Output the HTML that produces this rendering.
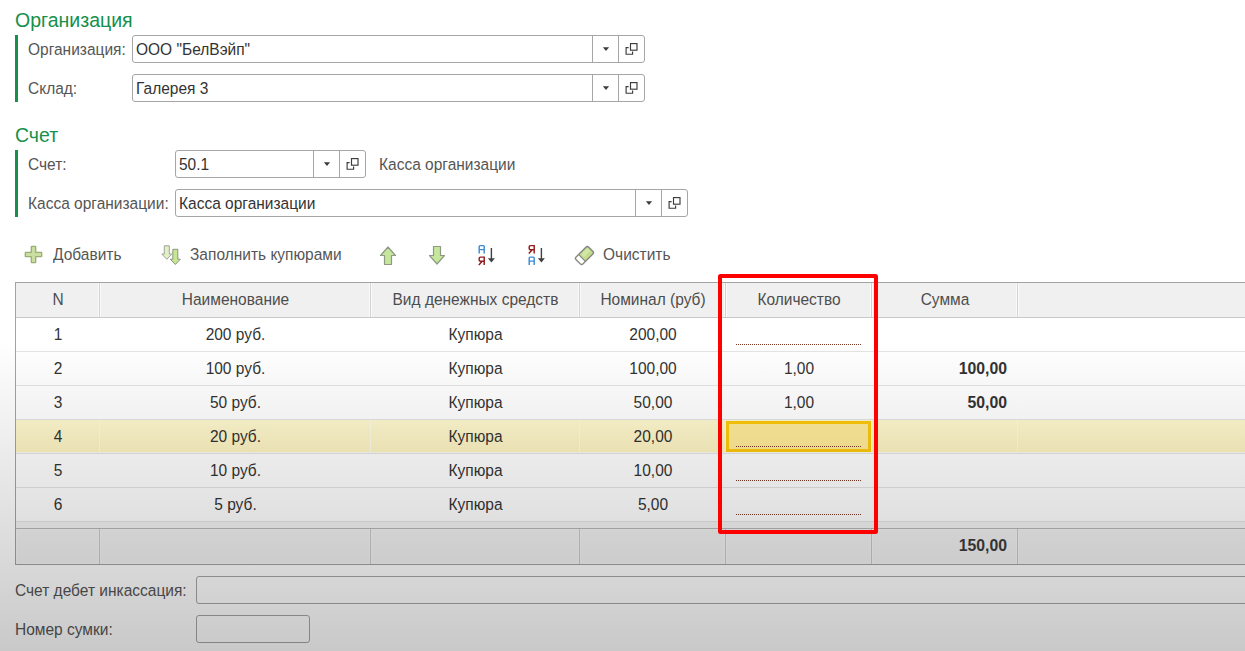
<!DOCTYPE html>
<html><head><meta charset="utf-8"><style>
html,body{margin:0;padding:0;width:1245px;height:651px;overflow:hidden;background:#fff;font-family:'Liberation Sans', sans-serif;}
</style></head><body>
<div style="position:absolute;left:15px;top:9px;font-size:19.5px;line-height:22px;color:#16904a;text-align:left;white-space:nowrap;transform:scaleY(1.05);transform-origin:0 18px;">Организация</div>
<div style="position:absolute;left:15px;top:35px;width:3px;height:67px;background:#16904a"></div>
<div style="position:absolute;left:28px;top:41px;font-size:15.5px;line-height:18px;color:#555555;text-align:left;white-space:nowrap;transform:scaleY(1.1);transform-origin:0 14px;">Организация:</div>
<div style="position:absolute;left:132px;top:35px;width:511px;height:26px;border:1px solid #a6a6a6;border-radius:3px;background:#fff"></div>
<div style="position:absolute;left:592px;top:35px;width:1px;height:28px;background:#a6a6a6"></div>
<div style="position:absolute;left:618px;top:35px;width:1px;height:28px;background:#a6a6a6"></div>
<svg style="position:absolute;left:600.5px;top:45.0px" width="10" height="8" viewBox="0 0 10 8"><path d="M1.9 2.2H8.1L5 6Z" fill="#3c3c3c"/></svg>
<svg style="position:absolute;left:623px;top:39px" width="20" height="20" viewBox="0 0 20 20"><rect x="7.5" y="4.6" width="6.5" height="6.6" fill="none" stroke="#3c3c3c" stroke-width="1.15"/><path d="M5.6 8.6H3.1V15.2H9.6V12.6" fill="none" stroke="#3c3c3c" stroke-width="1.15"/></svg>
<div style="position:absolute;left:136px;top:40.5px;font-size:15.5px;line-height:18px;color:#333333;text-align:left;white-space:nowrap;transform:scaleY(1.1);transform-origin:0 14px;">ООО "БелВэйп"</div>
<div style="position:absolute;left:28px;top:80px;font-size:15.5px;line-height:18px;color:#555555;text-align:left;white-space:nowrap;transform:scaleY(1.1);transform-origin:0 14px;">Склад:</div>
<div style="position:absolute;left:132px;top:74px;width:511px;height:26px;border:1px solid #a6a6a6;border-radius:3px;background:#fff"></div>
<div style="position:absolute;left:592px;top:74px;width:1px;height:28px;background:#a6a6a6"></div>
<div style="position:absolute;left:618px;top:74px;width:1px;height:28px;background:#a6a6a6"></div>
<svg style="position:absolute;left:600.5px;top:84.0px" width="10" height="8" viewBox="0 0 10 8"><path d="M1.9 2.2H8.1L5 6Z" fill="#3c3c3c"/></svg>
<svg style="position:absolute;left:623px;top:78px" width="20" height="20" viewBox="0 0 20 20"><rect x="7.5" y="4.6" width="6.5" height="6.6" fill="none" stroke="#3c3c3c" stroke-width="1.15"/><path d="M5.6 8.6H3.1V15.2H9.6V12.6" fill="none" stroke="#3c3c3c" stroke-width="1.15"/></svg>
<div style="position:absolute;left:136px;top:79.5px;font-size:15.5px;line-height:18px;color:#333333;text-align:left;white-space:nowrap;transform:scaleY(1.1);transform-origin:0 14px;">Галерея 3</div>
<div style="position:absolute;left:15px;top:124px;font-size:19.5px;line-height:22px;color:#16904a;text-align:left;white-space:nowrap;transform:scaleY(1.05);transform-origin:0 18px;">Счет</div>
<div style="position:absolute;left:15px;top:150px;width:3px;height:67px;background:#16904a"></div>
<div style="position:absolute;left:28px;top:156px;font-size:15.5px;line-height:18px;color:#555555;text-align:left;white-space:nowrap;transform:scaleY(1.1);transform-origin:0 14px;">Счет:</div>
<div style="position:absolute;left:175px;top:150px;width:189px;height:26px;border:1px solid #a6a6a6;border-radius:3px;background:#fff"></div>
<div style="position:absolute;left:313px;top:150px;width:1px;height:28px;background:#a6a6a6"></div>
<div style="position:absolute;left:339px;top:150px;width:1px;height:28px;background:#a6a6a6"></div>
<svg style="position:absolute;left:321.5px;top:160.0px" width="10" height="8" viewBox="0 0 10 8"><path d="M1.9 2.2H8.1L5 6Z" fill="#3c3c3c"/></svg>
<svg style="position:absolute;left:344px;top:154px" width="20" height="20" viewBox="0 0 20 20"><rect x="7.5" y="4.6" width="6.5" height="6.6" fill="none" stroke="#3c3c3c" stroke-width="1.15"/><path d="M5.6 8.6H3.1V15.2H9.6V12.6" fill="none" stroke="#3c3c3c" stroke-width="1.15"/></svg>
<div style="position:absolute;left:179px;top:155.5px;font-size:15.5px;line-height:18px;color:#333333;text-align:left;white-space:nowrap;transform:scaleY(1.1);transform-origin:0 14px;">50.1</div>
<div style="position:absolute;left:379px;top:156px;font-size:15.5px;line-height:18px;color:#555555;text-align:left;white-space:nowrap;transform:scaleY(1.1);transform-origin:0 14px;">Касса организации</div>
<div style="position:absolute;left:28px;top:195px;font-size:15.5px;line-height:18px;color:#555555;text-align:left;white-space:nowrap;transform:scaleY(1.1);transform-origin:0 14px;">Касса организации:</div>
<div style="position:absolute;left:175px;top:189px;width:511px;height:26px;border:1px solid #a6a6a6;border-radius:3px;background:#fff"></div>
<div style="position:absolute;left:635px;top:189px;width:1px;height:28px;background:#a6a6a6"></div>
<div style="position:absolute;left:661px;top:189px;width:1px;height:28px;background:#a6a6a6"></div>
<svg style="position:absolute;left:643.5px;top:199.0px" width="10" height="8" viewBox="0 0 10 8"><path d="M1.9 2.2H8.1L5 6Z" fill="#3c3c3c"/></svg>
<svg style="position:absolute;left:666px;top:193px" width="20" height="20" viewBox="0 0 20 20"><rect x="7.5" y="4.6" width="6.5" height="6.6" fill="none" stroke="#3c3c3c" stroke-width="1.15"/><path d="M5.6 8.6H3.1V15.2H9.6V12.6" fill="none" stroke="#3c3c3c" stroke-width="1.15"/></svg>
<div style="position:absolute;left:179px;top:194.5px;font-size:15.5px;line-height:18px;color:#333333;text-align:left;white-space:nowrap;transform:scaleY(1.1);transform-origin:0 14px;">Касса организации</div>
<div style="position:absolute;left:53px;top:246px;font-size:15.5px;line-height:18px;color:#555555;text-align:left;white-space:nowrap;transform:scaleY(1.1);transform-origin:0 14px;">Добавить</div>
<div style="position:absolute;left:190px;top:246px;font-size:15.5px;line-height:18px;color:#555555;text-align:left;white-space:nowrap;transform:scaleY(1.1);transform-origin:0 14px;">Заполнить купюрами</div>
<div style="position:absolute;left:603px;top:246px;font-size:15.5px;line-height:18px;color:#555555;text-align:left;white-space:nowrap;transform:scaleY(1.1);transform-origin:0 14px;">Очистить</div>
<svg style="position:absolute;left:24px;top:245px" width="20" height="20" viewBox="0 0 20 20"><path d="M7.3 1.8Q7.3 1.3 7.8 1.3H11.2Q11.7 1.3 11.7 1.8V7.3H17.2Q17.7 7.3 17.7 7.8V11.2Q17.7 11.7 17.2 11.7H11.7V17.2Q11.7 17.7 11.2 17.7H7.8Q7.3 17.7 7.3 17.2V11.7H1.8Q1.3 11.7 1.3 11.2V7.8Q1.3 7.3 1.8 7.3H7.3Z" fill="#c9dea0" stroke="#98ae72" stroke-width="1.3" stroke-linejoin="round"/></svg>
<svg style="position:absolute;left:160px;top:244px" width="24" height="22" viewBox="0 0 24 22"><path d="M4.3 1.8H9.3V10H11.8L6.8 15.3L1.8 10H4.3Z" fill="#e2f0c6" stroke="#9ea496" stroke-width="1" stroke-linejoin="round"/><path d="M12.8 5.3H17.8V15.2H20.3L15.3 20.5L10.3 15.2H12.8Z" fill="#c6e690" stroke="#8c9484" stroke-width="1" stroke-linejoin="round"/></svg>
<svg style="position:absolute;left:378px;top:245px" width="20" height="22" viewBox="0 0 20 22"><path d="M10 2L17.5 10.5H13.5V19.5H6.5V10.5H2.5Z" fill="#c6e69c" stroke="#8e9a84" stroke-width="1.2" stroke-linejoin="round"/></svg>
<svg style="position:absolute;left:427px;top:245px" width="20" height="22" viewBox="0 0 20 22"><path d="M6.5 1.5H13.5V10.5H17.5L10 19L2.5 10.5H6.5Z" fill="#c6e69c" stroke="#8e9a84" stroke-width="1.2" stroke-linejoin="round"/></svg>
<svg style="position:absolute;left:477px;top:244px" width="20" height="22" viewBox="0 0 20 22"><path d="M2.2 9.6V2.6Q2.2 1.6 3.2 1.6H6.2Q7.2 1.6 7.2 2.6V9.6M2.2 5.6H7.2" fill="none" stroke="#3d8cd2" stroke-width="1.45"/><path d="M7.2 21.1V13.1H3.4Q2.2 13.1 2.2 14.3V16.1Q2.2 17.3 3.4 17.3H7.2M5.2 17.3L1.8 20.9" fill="none" stroke="#921c1c" stroke-width="1.45"/><path d="M14.4 4V15.5" stroke="#404040" stroke-width="1.4"/><path d="M10.9 14.2H17.9L14.4 18.4Z" fill="#404040"/></svg>
<svg style="position:absolute;left:527px;top:244px" width="20" height="22" viewBox="0 0 20 22"><path d="M7.2 9.6V1.6H3.4Q2.2 1.6 2.2 2.8V4.6Q2.2 5.8 3.4 5.8H7.2M5.2 5.8L1.8 9.4" fill="none" stroke="#921c1c" stroke-width="1.45"/><path d="M2.2 21.1V14.1Q2.2 13.1 3.2 13.1H6.2Q7.2 13.1 7.2 14.1V21.1M2.2 17.1H7.2" fill="none" stroke="#3d8cd2" stroke-width="1.45"/><path d="M14.4 4V15.5" stroke="#404040" stroke-width="1.4"/><path d="M10.9 14.2H17.9L14.4 18.4Z" fill="#404040"/></svg>
<svg style="position:absolute;left:573px;top:244px" width="23" height="23" viewBox="0 0 23 23"><g transform="rotate(-45 11.5 11.5)"><rect x="2.6" y="6.6" width="17.8" height="9.8" rx="2" fill="#c2dc8a" stroke="#858585" stroke-width="1.4"/><rect x="10" y="8.3" width="8.5" height="4" fill="#d2e6a8"/><path d="M8 7.4V15.6H4.6Q3.3 15.6 3.3 14.3V8.7Q3.3 7.4 4.6 7.4Z" fill="#fff"/><path d="M8 6.8V16.2" stroke="#858585" stroke-width="1.1"/></g></svg>
<div style="position:absolute;left:15px;top:282px;width:1230px;height:282px;background:#ffffff"></div>
<div style="position:absolute;left:16px;top:283px;width:1229px;height:34px;background:#f0f0f0"></div>
<div style="position:absolute;left:15px;top:282px;width:1230px;height:1px;background:#a3a3a3"></div>
<div style="position:absolute;left:16px;top:317px;width:1229px;height:1px;background:#c9c9c9"></div>
<div style="position:absolute;left:99px;top:283px;width:1px;height:34px;background:#d2d2d2"></div>
<div style="position:absolute;left:100px;top:283px;width:1px;height:34px;background:#fbfbfb"></div>
<div style="position:absolute;left:98px;top:283px;width:1px;height:34px;background:#fafafa"></div>
<div style="position:absolute;left:370px;top:283px;width:1px;height:34px;background:#d2d2d2"></div>
<div style="position:absolute;left:371px;top:283px;width:1px;height:34px;background:#fbfbfb"></div>
<div style="position:absolute;left:369px;top:283px;width:1px;height:34px;background:#fafafa"></div>
<div style="position:absolute;left:579px;top:283px;width:1px;height:34px;background:#d2d2d2"></div>
<div style="position:absolute;left:580px;top:283px;width:1px;height:34px;background:#fbfbfb"></div>
<div style="position:absolute;left:578px;top:283px;width:1px;height:34px;background:#fafafa"></div>
<div style="position:absolute;left:725px;top:283px;width:1px;height:34px;background:#d2d2d2"></div>
<div style="position:absolute;left:726px;top:283px;width:1px;height:34px;background:#fbfbfb"></div>
<div style="position:absolute;left:724px;top:283px;width:1px;height:34px;background:#fafafa"></div>
<div style="position:absolute;left:871px;top:283px;width:1px;height:34px;background:#d2d2d2"></div>
<div style="position:absolute;left:872px;top:283px;width:1px;height:34px;background:#fbfbfb"></div>
<div style="position:absolute;left:870px;top:283px;width:1px;height:34px;background:#fafafa"></div>
<div style="position:absolute;left:1017px;top:283px;width:1px;height:34px;background:#d2d2d2"></div>
<div style="position:absolute;left:1018px;top:283px;width:1px;height:34px;background:#fbfbfb"></div>
<div style="position:absolute;left:1016px;top:283px;width:1px;height:34px;background:#fafafa"></div>
<div style="position:absolute;left:16px;top:351px;width:1229px;height:1px;background:#e4e4e4"></div>
<div style="position:absolute;left:16px;top:385px;width:1229px;height:1px;background:#e4e4e4"></div>
<div style="position:absolute;left:16px;top:419px;width:1229px;height:1px;background:#e4e4e4"></div>
<div style="position:absolute;left:16px;top:453px;width:1229px;height:1px;background:#e4e4e4"></div>
<div style="position:absolute;left:16px;top:487px;width:1229px;height:1px;background:#e4e4e4"></div>
<div style="position:absolute;left:16px;top:521px;width:1229px;height:1px;background:#e4e4e4"></div>
<div style="position:absolute;left:16px;top:420px;width:1229px;height:33px;background:#fbf9f0"></div>
<div style="position:absolute;left:16px;top:420px;width:1229px;height:32px;background:linear-gradient(#fff9cf,#fdf3c2)"></div>
<div style="position:absolute;left:99px;top:420px;width:1px;height:32px;background:#fffbe8"></div>
<div style="position:absolute;left:370px;top:420px;width:1px;height:32px;background:#fffbe8"></div>
<div style="position:absolute;left:579px;top:420px;width:1px;height:32px;background:#fffbe8"></div>
<div style="position:absolute;left:725px;top:420px;width:1px;height:32px;background:#fffbe8"></div>
<div style="position:absolute;left:871px;top:420px;width:1px;height:32px;background:#fffbe8"></div>
<div style="position:absolute;left:1017px;top:420px;width:1px;height:32px;background:#fffbe8"></div>
<div style="position:absolute;left:16px;top:522px;width:1229px;height:6px;background:#f4f4f4"></div>
<div style="position:absolute;left:16px;top:528px;width:1229px;height:1px;background:#b8b8b8"></div>
<div style="position:absolute;left:16px;top:529px;width:1229px;height:35px;background:#f5f5f5"></div>
<div style="position:absolute;left:17px;top:530px;width:1228px;height:33px;background:#f1f1f1"></div>
<div style="position:absolute;left:98px;top:529px;width:3px;height:35px;background:#f6f6f6"></div>
<div style="position:absolute;left:99px;top:529px;width:1px;height:35px;background:#c8c8c8"></div>
<div style="position:absolute;left:369px;top:529px;width:3px;height:35px;background:#f6f6f6"></div>
<div style="position:absolute;left:370px;top:529px;width:1px;height:35px;background:#c8c8c8"></div>
<div style="position:absolute;left:578px;top:529px;width:3px;height:35px;background:#f6f6f6"></div>
<div style="position:absolute;left:579px;top:529px;width:1px;height:35px;background:#c8c8c8"></div>
<div style="position:absolute;left:724px;top:529px;width:3px;height:35px;background:#f6f6f6"></div>
<div style="position:absolute;left:725px;top:529px;width:1px;height:35px;background:#c8c8c8"></div>
<div style="position:absolute;left:870px;top:529px;width:3px;height:35px;background:#f6f6f6"></div>
<div style="position:absolute;left:871px;top:529px;width:1px;height:35px;background:#c8c8c8"></div>
<div style="position:absolute;left:1016px;top:529px;width:3px;height:35px;background:#f6f6f6"></div>
<div style="position:absolute;left:1017px;top:529px;width:1px;height:35px;background:#c8c8c8"></div>
<div style="position:absolute;left:15px;top:564px;width:1230px;height:1px;background:#a3a3a3"></div>
<div style="position:absolute;left:15px;top:282px;width:1px;height:283px;background:#a3a3a3"></div>
<div style="position:absolute;left:16px;top:291px;width:84px;font-size:15.5px;line-height:18px;color:#4d4d4d;text-align:center;white-space:nowrap;transform:scaleY(1.1);transform-origin:0 14px;">N</div>
<div style="position:absolute;left:100px;top:291px;width:271px;font-size:15.5px;line-height:18px;color:#4d4d4d;text-align:center;white-space:nowrap;transform:scaleY(1.1);transform-origin:0 14px;">Наименование</div>
<div style="position:absolute;left:371px;top:291px;width:209px;font-size:15.5px;line-height:18px;color:#4d4d4d;text-align:center;white-space:nowrap;transform:scaleY(1.1);transform-origin:0 14px;">Вид денежных средств</div>
<div style="position:absolute;left:580px;top:291px;width:146px;font-size:15.5px;line-height:18px;color:#4d4d4d;text-align:center;white-space:nowrap;transform:scaleY(1.1);transform-origin:0 14px;">Номинал (руб)</div>
<div style="position:absolute;left:726px;top:291px;width:146px;font-size:15.5px;line-height:18px;color:#4d4d4d;text-align:center;white-space:nowrap;transform:scaleY(1.1);transform-origin:0 14px;">Количество</div>
<div style="position:absolute;left:872px;top:291px;width:146px;font-size:15.5px;line-height:18px;color:#4d4d4d;text-align:center;white-space:nowrap;transform:scaleY(1.1);transform-origin:0 14px;">Сумма</div>
<div style="position:absolute;left:16px;top:326px;width:84px;font-size:15.5px;line-height:18px;color:#333333;text-align:center;white-space:nowrap;transform:scaleY(1.1);transform-origin:0 14px;">1</div>
<div style="position:absolute;left:100px;top:326px;width:271px;font-size:15.5px;line-height:18px;color:#333333;text-align:center;white-space:nowrap;transform:scaleY(1.1);transform-origin:0 14px;">200 руб.</div>
<div style="position:absolute;left:371px;top:326px;width:209px;font-size:15.5px;line-height:18px;color:#333333;text-align:center;white-space:nowrap;transform:scaleY(1.1);transform-origin:0 14px;">Купюра</div>
<div style="position:absolute;left:580px;top:326px;width:146px;font-size:15.5px;line-height:18px;color:#333333;text-align:center;white-space:nowrap;transform:scaleY(1.1);transform-origin:0 14px;">200,00</div>
<div style="position:absolute;left:16px;top:360px;width:84px;font-size:15.5px;line-height:18px;color:#333333;text-align:center;white-space:nowrap;transform:scaleY(1.1);transform-origin:0 14px;">2</div>
<div style="position:absolute;left:100px;top:360px;width:271px;font-size:15.5px;line-height:18px;color:#333333;text-align:center;white-space:nowrap;transform:scaleY(1.1);transform-origin:0 14px;">100 руб.</div>
<div style="position:absolute;left:371px;top:360px;width:209px;font-size:15.5px;line-height:18px;color:#333333;text-align:center;white-space:nowrap;transform:scaleY(1.1);transform-origin:0 14px;">Купюра</div>
<div style="position:absolute;left:580px;top:360px;width:146px;font-size:15.5px;line-height:18px;color:#333333;text-align:center;white-space:nowrap;transform:scaleY(1.1);transform-origin:0 14px;">100,00</div>
<div style="position:absolute;left:726px;top:360px;width:146px;font-size:15.5px;line-height:18px;color:#333333;text-align:center;white-space:nowrap;transform:scaleY(1.1);transform-origin:0 14px;">1,00</div>
<div style="position:absolute;left:871px;top:360px;width:136px;font-size:15.8px;line-height:18px;color:#333333;text-align:right;white-space:nowrap;font-weight:bold;">100,00</div>
<div style="position:absolute;left:16px;top:394px;width:84px;font-size:15.5px;line-height:18px;color:#333333;text-align:center;white-space:nowrap;transform:scaleY(1.1);transform-origin:0 14px;">3</div>
<div style="position:absolute;left:100px;top:394px;width:271px;font-size:15.5px;line-height:18px;color:#333333;text-align:center;white-space:nowrap;transform:scaleY(1.1);transform-origin:0 14px;">50 руб.</div>
<div style="position:absolute;left:371px;top:394px;width:209px;font-size:15.5px;line-height:18px;color:#333333;text-align:center;white-space:nowrap;transform:scaleY(1.1);transform-origin:0 14px;">Купюра</div>
<div style="position:absolute;left:580px;top:394px;width:146px;font-size:15.5px;line-height:18px;color:#333333;text-align:center;white-space:nowrap;transform:scaleY(1.1);transform-origin:0 14px;">50,00</div>
<div style="position:absolute;left:726px;top:394px;width:146px;font-size:15.5px;line-height:18px;color:#333333;text-align:center;white-space:nowrap;transform:scaleY(1.1);transform-origin:0 14px;">1,00</div>
<div style="position:absolute;left:871px;top:394px;width:136px;font-size:15.8px;line-height:18px;color:#333333;text-align:right;white-space:nowrap;font-weight:bold;">50,00</div>
<div style="position:absolute;left:16px;top:428px;width:84px;font-size:15.5px;line-height:18px;color:#333333;text-align:center;white-space:nowrap;transform:scaleY(1.1);transform-origin:0 14px;">4</div>
<div style="position:absolute;left:100px;top:428px;width:271px;font-size:15.5px;line-height:18px;color:#333333;text-align:center;white-space:nowrap;transform:scaleY(1.1);transform-origin:0 14px;">20 руб.</div>
<div style="position:absolute;left:371px;top:428px;width:209px;font-size:15.5px;line-height:18px;color:#333333;text-align:center;white-space:nowrap;transform:scaleY(1.1);transform-origin:0 14px;">Купюра</div>
<div style="position:absolute;left:580px;top:428px;width:146px;font-size:15.5px;line-height:18px;color:#333333;text-align:center;white-space:nowrap;transform:scaleY(1.1);transform-origin:0 14px;">20,00</div>
<div style="position:absolute;left:16px;top:462px;width:84px;font-size:15.5px;line-height:18px;color:#333333;text-align:center;white-space:nowrap;transform:scaleY(1.1);transform-origin:0 14px;">5</div>
<div style="position:absolute;left:100px;top:462px;width:271px;font-size:15.5px;line-height:18px;color:#333333;text-align:center;white-space:nowrap;transform:scaleY(1.1);transform-origin:0 14px;">10 руб.</div>
<div style="position:absolute;left:371px;top:462px;width:209px;font-size:15.5px;line-height:18px;color:#333333;text-align:center;white-space:nowrap;transform:scaleY(1.1);transform-origin:0 14px;">Купюра</div>
<div style="position:absolute;left:580px;top:462px;width:146px;font-size:15.5px;line-height:18px;color:#333333;text-align:center;white-space:nowrap;transform:scaleY(1.1);transform-origin:0 14px;">10,00</div>
<div style="position:absolute;left:16px;top:496px;width:84px;font-size:15.5px;line-height:18px;color:#333333;text-align:center;white-space:nowrap;transform:scaleY(1.1);transform-origin:0 14px;">6</div>
<div style="position:absolute;left:100px;top:496px;width:271px;font-size:15.5px;line-height:18px;color:#333333;text-align:center;white-space:nowrap;transform:scaleY(1.1);transform-origin:0 14px;">5 руб.</div>
<div style="position:absolute;left:371px;top:496px;width:209px;font-size:15.5px;line-height:18px;color:#333333;text-align:center;white-space:nowrap;transform:scaleY(1.1);transform-origin:0 14px;">Купюра</div>
<div style="position:absolute;left:580px;top:496px;width:146px;font-size:15.5px;line-height:18px;color:#333333;text-align:center;white-space:nowrap;transform:scaleY(1.1);transform-origin:0 14px;">5,00</div>
<div style="position:absolute;left:726px;top:421px;width:145px;height:31px;box-sizing:border-box;border:3px solid #fdc80a;background:#ffeb98"></div>
<div style="position:absolute;left:736px;top:344px;width:126px;height:1px;background-image:repeating-linear-gradient(to right,#7e3a26 0,#7e3a26 1px,transparent 1px,transparent 2px)"></div>
<div style="position:absolute;left:736px;top:446px;width:126px;height:1px;background-image:repeating-linear-gradient(to right,#7e3a26 0,#7e3a26 1px,transparent 1px,transparent 2px)"></div>
<div style="position:absolute;left:736px;top:480px;width:126px;height:1px;background-image:repeating-linear-gradient(to right,#7e3a26 0,#7e3a26 1px,transparent 1px,transparent 2px)"></div>
<div style="position:absolute;left:736px;top:514px;width:126px;height:1px;background-image:repeating-linear-gradient(to right,#7e3a26 0,#7e3a26 1px,transparent 1px,transparent 2px)"></div>
<div style="position:absolute;left:871px;top:537px;width:136px;font-size:15.8px;line-height:18px;color:#3c3c3c;text-align:right;white-space:nowrap;font-weight:bold;">150,00</div>
<div style="position:absolute;left:15px;top:582px;font-size:15.5px;line-height:18px;color:#555555;text-align:left;white-space:nowrap;transform:scaleY(1.1);transform-origin:0 14px;">Счет дебет инкассация:</div>
<div style="position:absolute;left:196px;top:576px;width:1100px;height:26px;border:1px solid #a6a6a6;border-radius:3px;background:#fff"></div>
<div style="position:absolute;left:15px;top:621px;font-size:15.5px;line-height:18px;color:#555555;text-align:left;white-space:nowrap;transform:scaleY(1.1);transform-origin:0 14px;">Номер сумки:</div>
<div style="position:absolute;left:196px;top:615px;width:112px;height:26px;border:1px solid #a6a6a6;border-radius:3px;background:#fff"></div>
<div style="position:absolute;left:0;top:0;width:1245px;height:651px;background:linear-gradient(to bottom,rgba(0,0,0,0) 0px,rgba(0,0,0,0) 340px,rgba(0,0,0,0.21) 651px)"></div>
<div style="position:absolute;left:718.4px;top:273.6px;width:151.9px;height:252.1px;border:4.05px solid #ff0000;border-radius:2.5px"></div>
</body></html>
